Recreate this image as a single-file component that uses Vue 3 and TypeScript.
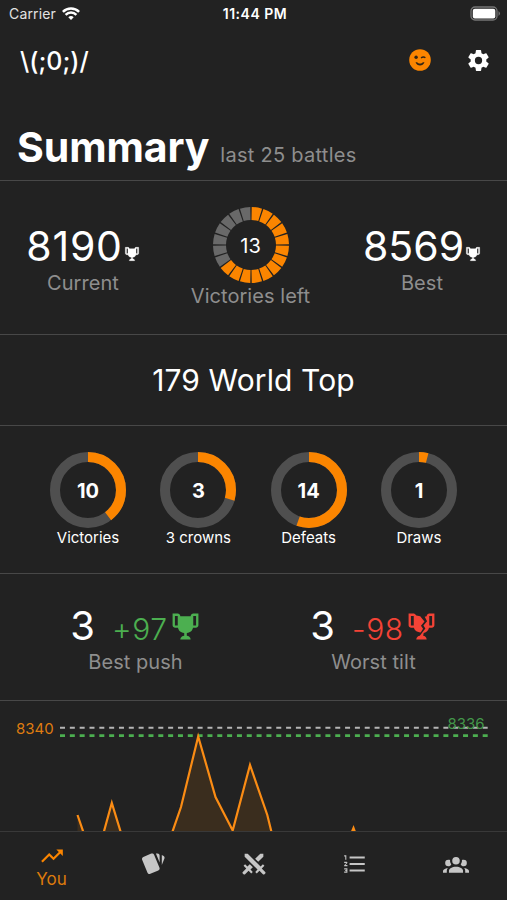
<script setup lang="ts">
interface Ring {
  label: string
  value: number
  share: number
}

interface Tab {
  name: string
  icon: string
  active?: boolean
}

const trophy =
  'M20.2,2H18C17.1,2 16,3 16,4H8C8,3 6.9,2 6,2H2V11C2,12 3,13 4,13H6.2C6.6,15 7.9,16.7 11,17V19.08C8,19.54 8,22 8,22H16C16,22 16,19.54 13,19.08V17C16.1,16.7 17.4,15 17.8,13H20C21,13 22,12 22,11V2H20.2M3.8,11.2V3.9H6V11.2H3.8M20.2,11.2H18V3.9H20.2V11.2Z'
const brokenTrophy =
  'M2,2H6C6.9,2 7.3,2.8 8,3.5L11,4L14.3,8.2L11.6,11.4L13.2,13.8L11.4,16.6C8,16.2 6.6,15 6.2,13H4C3,13 2,12 2,11V2M3.8,3.9V11.2H6V3.9H3.8M22,2V11C22,12 21,13 20,13H17.8C17.4,15 16.1,16.5 13.7,17L13.3,19.1C16,19.5 16,22 16,22H8C8,22 8,19.5 10.7,19.1L12.3,17L15,13.6L13.5,11.3L16.3,8L14.5,4.5L16,4C16,3 17.1,2 18,2H22M18,3.9V11.2H20.2V3.9H18Z'
const cog =
  'M12,15.5A3.5,3.5 0 0,1 8.5,12A3.5,3.5 0 0,1 12,8.5A3.5,3.5 0 0,1 15.5,12A3.5,3.5 0 0,1 12,15.5M19.43,12.97C19.47,12.65 19.5,12.33 19.5,12C19.5,11.67 19.47,11.34 19.43,11L21.54,9.37C21.73,9.22 21.78,8.95 21.66,8.73L19.66,5.27C19.54,5.05 19.27,4.96 19.05,5.05L16.56,6.05C16.04,5.66 15.5,5.32 14.87,5.07L14.5,2.42C14.46,2.18 14.25,2 14,2H10C9.75,2 9.54,2.18 9.5,2.42L9.13,5.07C8.5,5.32 7.96,5.66 7.44,6.05L4.95,5.05C4.73,4.96 4.46,5.05 4.34,5.27L2.34,8.73C2.21,8.95 2.27,9.22 2.46,9.37L4.57,11C4.53,11.34 4.5,11.67 4.5,12C4.5,12.33 4.53,12.65 4.57,12.97L2.46,14.63C2.27,14.78 2.21,15.05 2.34,15.27L4.34,18.73C4.46,18.95 4.73,19.03 4.95,18.95L7.44,17.94C7.96,18.34 8.5,18.68 9.13,18.93L9.5,21.58C9.54,21.82 9.75,22 10,22H14C14.25,22 14.46,21.82 14.5,21.58L14.87,18.93C15.5,18.67 16.04,18.34 16.56,17.94L19.05,18.95C19.27,19.03 19.54,18.95 19.66,18.73L21.66,15.27C21.78,15.05 21.73,14.78 21.54,14.63L19.43,12.97Z'

const rings: Ring[] = [
  { label: 'Victories', value: 10, share: 0.395 },
  { label: '3 crowns', value: 3, share: 0.295 },
  { label: 'Defeats', value: 14, share: 0.553 },
  { label: 'Draws', value: 1, share: 0.04 },
]
const ringLength = 2 * Math.PI * 33

const tabs: Tab[] = [
  {
    name: 'You',
    active: true,
    icon: 'M16,6L18.29,8.29L13.41,13.17L9.41,9.17L2,16.59L3.41,18L9.41,12L13.41,16L19.71,9.71L22,12V6H16Z',
  },
  {
    name: 'Decks',
    icon: 'M21.47,4.35L20.13,3.79V12.82L22.56,6.96C22.97,5.94 22.5,4.77 21.47,4.35M1.97,8.05L6.93,20C7.24,20.77 7.97,21.24 8.74,21.26C9,21.26 9.27,21.21 9.53,21.1L16.9,18.05C17.65,17.74 18.11,17 18.13,16.26C18.14,16 18.09,15.71 18,15.45L13,3.5C12.71,2.73 11.97,2.26 11.19,2.25C10.93,2.25 10.67,2.31 10.42,2.4L3.06,5.45C2.04,5.87 1.55,7.04 1.97,8.05M18.12,4.25A2,2 0 0,0 16.12,2.25H14.67L18.12,10.59',
  },
  {
    name: 'Battles',
    icon: 'M6.2,2.44L18.1,14.34L20.22,12.22L21.63,13.63L19.16,16.1L22.34,19.28C22.73,19.67 22.73,20.3 22.34,20.69L21.63,21.4C21.24,21.79 20.61,21.79 20.22,21.4L17,18.23L14.56,20.7L13.15,19.29L15.27,17.17L3.37,5.27V2.44H6.2M15.89,10L20.63,5.26V2.44H17.8L13.06,7.18L15.89,10M10.94,15L8.11,12.13L5.9,14.34L3.78,12.22L2.37,13.63L4.84,16.1L1.66,19.29C1.27,19.68 1.27,20.31 1.66,20.7L2.37,21.41C2.76,21.8 3.39,21.8 3.78,21.41L7,18.23L9.44,20.7L10.85,19.29L8.73,17.17L10.94,15Z',
  },
  {
    name: 'Rankings',
    icon: 'M7,13V11H21V13H7M7,19V17H21V19H7M7,7V5H21V7H7M3,8V5H2V4H4V8H3M2,17V16H5V20H2V19H4V18.5H3V17.5H4V17H2M4.25,10A0.75,0.75 0 0,1 5,10.75C5,10.95 4.92,11.14 4.79,11.27L3.12,13H5V14H2V13.08L4,11H2V10H4.25Z',
  },
  {
    name: 'Clan',
    icon: 'M12,5.5A3.5,3.5 0 0,1 15.5,9A3.5,3.5 0 0,1 12,12.5A3.5,3.5 0 0,1 8.5,9A3.5,3.5 0 0,1 12,5.5M5,8C5.56,8 6.08,8.15 6.53,8.42C6.38,9.85 6.8,11.27 7.66,12.38C7.16,13.34 6.16,14 5,14A3,3 0 0,1 2,11A3,3 0 0,1 5,8M19,8A3,3 0 0,1 22,11A3,3 0 0,1 19,14C17.84,14 16.84,13.34 16.34,12.38C17.2,11.27 17.62,9.85 17.47,8.42C17.92,8.15 18.44,8 19,8M5.5,18.25C5.5,16.18 8.41,14.5 12,14.5C15.59,14.5 18.5,16.18 18.5,18.25V20H5.5V18.25M0,20V18.5C0,17.11 1.89,15.94 4.45,15.6C3.86,16.28 3.5,17.22 3.5,18.25V20H0M24,20H20.5V18.25C20.5,17.22 20.14,16.28 19.55,15.6C22.11,15.94 24,17.11 24,18.5V20Z',
  },
]

const won = 13
const segments = Array.from({ length: 20 }, (_, i) => ({
  d: wedge(i * 18 + 1.1, (i + 1) * 18 - 1.1),
  filled: i < won,
}))

function wedge(from: number, to: number): string {
  const at = (r: number, deg: number) => {
    const a = ((deg - 90) * Math.PI) / 180
    return `${(38 + r * Math.cos(a)).toFixed(2)},${(38 + r * Math.sin(a)).toFixed(2)}`
  }
  return `M${at(38, from)}A38,38 0 0 1 ${at(38, to)}L${at(25, to)}A25,25 0 0 0 ${at(25, from)}Z`
}

const points: [number, number][] = [
  [77.5, 114], [94.7, 164], [111.8, 102], [129, 158], [146.5, 190], [163.7, 156],
  [181, 106], [198.2, 35.5], [215.5, 96], [232.7, 129.5], [250, 64], [267.3, 114],
  [284.5, 184], [319, 200], [336.3, 170], [353.5, 127], [370.7, 175], [388, 200],
]
const line = points.map((p) => p.join(',')).join(' ')
const area = `77.5,200 ${line} 388,220`
</script>

<template>
  <div class="screen">
    <div class="status">
      <div class="carrier">
        <span>Carrier</span>
        <svg class="wifi" viewBox="0 0 18 13">
          <path d="M9,13L6.3,10.2A3.9,3.9 0 0 1 11.7,10.2Z" fill="#fff" />
          <path d="M3.6,7.8A7.7,7.7 0 0 1 14.4,7.8M0.9,4.9A11.6,11.6 0 0 1 17.1,4.9" fill="none" stroke="#fff" stroke-width="2.5" />
        </svg>
      </div>
      <span class="clock">11:44 PM</span>
      <svg class="battery" viewBox="0 0 31 15">
        <rect x="1" y="1" width="26" height="13" rx="4" fill="none" stroke="#757575" stroke-width="1.3" />
        <rect x="2.8" y="2.7" width="22.5" height="9.8" rx="2" fill="#fff" />
        <path d="M28.5,5Q31.5,7.5 28.5,10Z" fill="#757575" />
      </svg>
    </div>

    <header class="header">
      <span class="player">\(;0;)/</span>
      <svg class="wink" viewBox="0 0 22 22">
        <circle cx="11" cy="11" r="10.8" fill="#fb8500" />
        <circle cx="7.1" cy="8.3" r="1.7" fill="#332514" />
        <path d="M12,8.8Q14.5,7.3 16.4,8.8" fill="none" stroke="#332514" stroke-width="1.4" />
        <path d="M6.5,13.2H8L9.4,14.3Q11,14.9 12.6,14.3L14,13.2H15.5Q14,16.4 11,16.4Q8,16.4 6.5,13.2Z" fill="#332514" />
      </svg>
      <svg class="cog" viewBox="0 0 24 24"><path :d="cog" /></svg>
    </header>

    <div class="heading">
      <h1>Summary</h1>
      <span class="sub">last 25 battles</span>
    </div>

    <section class="scores">
      <div class="score current">
        <div class="figure"><span>8190</span><svg viewBox="0 0 24 24"><path :d="trophy" /></svg></div>
        <span class="caption">Current</span>
      </div>
      <div class="left">
        <div class="dial">
          <svg viewBox="0 0 76 76">
            <path v-for="(s, i) in segments" :key="i" :d="s.d" :class="{ filled: s.filled }" />
          </svg>
          <span class="dial-value">13</span>
        </div>
        <span class="caption">Victories left</span>
      </div>
      <div class="score best">
        <div class="figure"><span>8569</span><svg viewBox="0 0 24 24"><path :d="trophy" /></svg></div>
        <span class="caption">Best</span>
      </div>
    </section>

    <section class="world"><span>179 World Top</span></section>

    <section class="rings">
      <div v-for="r in rings" :key="r.label" class="ring">
        <div class="dial">
          <svg viewBox="0 0 76 76">
            <circle class="track" cx="38" cy="38" r="33" />
            <circle
              class="arc"
              cx="38"
              cy="38"
              r="33"
              :stroke-dasharray="`${r.share * ringLength} ${ringLength}`"
              transform="rotate(-90 38 38)"
            />
          </svg>
          <span class="dial-value">{{ r.value }}</span>
        </div>
        <span class="ring-label">{{ r.label }}</span>
      </div>
    </section>

    <section class="streaks">
      <div class="streak push">
        <div class="streak-row">
          <span class="count">3</span>
          <span class="delta">+97</span>
          <svg viewBox="0 0 24 24"><path :d="trophy" /></svg>
        </div>
        <span class="caption">Best push</span>
      </div>
      <div class="streak tilt">
        <div class="streak-row">
          <span class="count">3</span>
          <span class="delta">-98</span>
          <svg viewBox="0 0 24 24"><path :d="brokenTrophy" /></svg>
        </div>
        <span class="caption">Worst tilt</span>
      </div>
    </section>

    <section class="chart">
      <svg viewBox="0 0 507 130">
        <polygon :points="area" fill="#fb8500" fill-opacity="0.11" />
        <path d="M60,26.8H491.5" class="dash top" />
        <path d="M60,34.6H491.5" class="dash peak" />
        <polyline :points="line" class="trend" />
        <text x="16" y="33.2" class="axis start">8340</text>
        <text x="447.5" y="28.2" class="axis end">8336</text>
      </svg>
    </section>

    <nav class="tabs">
      <div v-for="t in tabs" :key="t.name" class="tab" :class="{ active: t.active }">
        <svg viewBox="0 0 24 24"><path :d="t.icon" /></svg>
        <span v-if="t.active">{{ t.name }}</span>
      </div>
    </nav>
  </div>
</template>

<style>
body {
  margin: 0;
  background: #222;
}
</style>

<style scoped>
.screen {
  width: 507px;
  height: 900px;
  display: flex;
  flex-direction: column;
  overflow: hidden;
  background: #222;
  color: #fff;
  font-family: Inter, 'Liberation Sans', sans-serif;
}
.screen,
.screen * {
  box-sizing: border-box;
}
svg {
  display: block;
  flex: none;
}
span {
  white-space: nowrap;
}
section {
  flex: none;
  border-bottom: 1px solid #484848;
}
.status {
  height: 27px;
  flex: none;
  display: grid;
  grid-template-columns: 1fr auto 1fr;
  align-items: center;
  padding: 0 6px 0 9px;
}
.carrier {
  display: flex;
  align-items: center;
  gap: 6px;
  font-size: 14px;
  letter-spacing: 0.15px;
  color: #e2e2e2;
}
.wifi {
  width: 18px;
  height: 13px;
}
.clock {
  font-size: 14px;
  font-weight: 600;
  letter-spacing: 0.5px;
}
.battery {
  width: 31px;
  height: 15px;
  justify-self: end;
}
.header {
  height: 66px;
  flex: none;
  display: flex;
  align-items: center;
  padding: 0 16.5px 0 20px;
}
.player {
  flex: 1;
  font-size: 25px;
  font-weight: 500;
  padding-top: 1px;
}
.wink {
  width: 22px;
  height: 22px;
  margin-right: 35px;
}
.cog {
  width: 25px;
  height: 25px;
  fill: #fff;
}
.heading {
  height: 88px;
  flex: none;
  display: flex;
  align-items: baseline;
  gap: 11px;
  padding: 29px 0 0 17px;
  border-bottom: 1px solid #484848;
}
h1 {
  margin: 0;
  font-size: 41px;
  line-height: 50px;
  font-weight: 700;
  letter-spacing: -0.1px;
}
.sub,
.caption {
  font-size: 20px;
  line-height: 24px;
  color: #8e8e8e;
}
.sub {
  letter-spacing: 0.27px;
}
.caption {
  letter-spacing: 0.05px;
}
.scores {
  height: 154px;
  display: grid;
  grid-template-columns: 112px 120px 118px;
  justify-content: space-between;
  padding: 26px 26px 0 27px;
}
.score {
  display: flex;
  flex-direction: column;
  align-items: center;
  padding-top: 14px;
}
.figure {
  display: flex;
  align-items: flex-end;
  font-size: 41px;
  line-height: 50px;
}
.current .figure {
  letter-spacing: 0.8px;
}
.figure svg {
  width: 16px;
  height: 16px;
  margin: 0 0 9px 1px;
  fill: #fff;
  stroke: #fff;
  stroke-width: 0.5;
}
.left {
  display: flex;
  flex-direction: column;
  align-items: center;
  padding-right: 1px;
}
.left .caption {
  padding-top: 1px;
}
.dial {
  width: 76px;
  height: 76px;
  display: grid;
  place-items: center;
}
.dial > * {
  grid-area: 1 / 1;
}
.dial svg {
  width: 76px;
  height: 76px;
}
.dial path {
  fill: #696969;
}
.dial path.filled {
  fill: #fb8500;
}
.dial-value {
  font-size: 20px;
  padding-top: 2px;
}
.world {
  height: 91px;
  display: flex;
  align-items: center;
  justify-content: center;
  font-size: 30px;
  letter-spacing: 0.1px;
}
.rings {
  height: 148px;
  display: flex;
  justify-content: center;
  gap: 34.3px;
  padding-top: 26px;
}
.ring {
  width: 76px;
  display: flex;
  flex-direction: column;
  align-items: center;
}
.ring .dial-value {
  font-weight: 700;
}
.ring-label {
  font-size: 15px;
  line-height: 20px;
}
.track,
.arc {
  fill: none;
  stroke: #4f4f4f;
  stroke-width: 10;
}
.arc {
  stroke: #fb8500;
}
.streaks {
  height: 127px;
  display: grid;
  grid-template-columns: 238px 238px;
  justify-content: center;
  padding: 27px 0 0 2px;
}
.streak {
  display: flex;
  flex-direction: column;
  align-items: center;
}
.streak-row {
  height: 49px;
  display: flex;
  align-items: baseline;
  line-height: 50px;
}
.count {
  font-size: 40px;
  margin-right: 17px;
}
.delta {
  font-size: 30px;
  font-weight: 300;
  letter-spacing: 0.6px;
}
.streak svg {
  width: 31px;
  height: 31px;
  margin: 2px 0 0 2px;
  align-self: center;
}
.push .delta {
  color: #4caf50;
}
.push svg {
  fill: #4caf50;
}
.tilt .delta {
  color: #f44336;
}
.tilt svg {
  fill: #f44336;
}
.chart {
  height: 131px;
  overflow: hidden;
  border-bottom-color: #393939;
}
.chart svg {
  width: 507px;
  height: 130px;
}
.dash {
  fill: none;
  stroke-width: 2;
  stroke-dasharray: 5 4.83;
}
.dash.top {
  stroke: #b5b5b5;
}
.dash.peak {
  stroke: #4caf50;
  stroke-width: 2.6;
}
.trend {
  fill: none;
  stroke: #fb8c14;
  stroke-width: 2.2;
}
.axis {
  font-size: 15px;
}
.axis.start {
  fill: #df7c10;
}
.axis.end {
  fill: #43974a;
}
.tabs {
  height: 68px;
  flex: none;
  display: grid;
  grid-template-columns: repeat(5, 1fr);
  padding-left: 1px;
}
.tab {
  display: flex;
  flex-direction: column;
  align-items: center;
  padding-top: 19px;
}
.tab svg {
  width: 26px;
  height: 26px;
  fill: #c6c6c6;
}
.tab.active {
  padding-top: 11px;
}
.tab.active svg {
  fill: #fb8500;
}
.tab span {
  font-size: 17px;
  line-height: 20px;
  color: #dc7a0c;
}
</style>
